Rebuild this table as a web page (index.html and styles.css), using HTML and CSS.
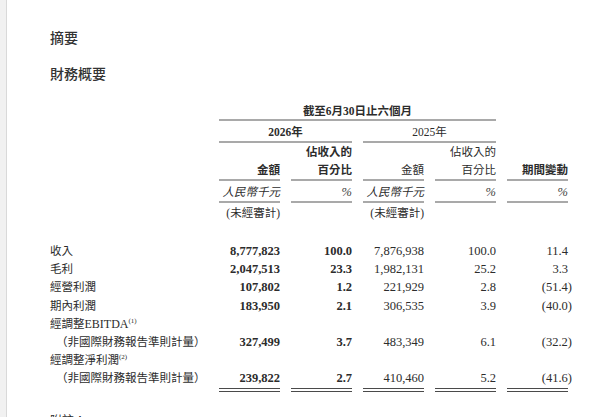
FILE: index.html
```html
<!DOCTYPE html>
<html lang="zh-Hant">
<head>
<meta charset="utf-8">
<link rel="stylesheet" href="styles.css">
</head>
<body>
<div class="viewer">
  <div class="gutter"></div>
  <main class="page">
    <h1 class="title">摘要</h1>
    <h2 class="subtitle">財務概要</h2>
    <div class="fin">
      <!-- header row 1 -->
      <div class="c"></div>
      <div class="c h span4 line b">截至6月30日止六個月</div>
      <div class="c"></div>
      <!-- header row 2 -->
      <div class="c"></div>
      <div class="c h2 span2 line b">2026年</div>
      <div class="c h2 span2 line">2025年</div>
      <div class="c"></div>
      <!-- header row 3 -->
      <div class="c"></div>
      <div class="c h3 r line b">金額</div>
      <div class="c h3 r line b">佔收入的<br>百分比</div>
      <div class="c h3 r line">金額</div>
      <div class="c h3 r line">佔收入的<br>百分比</div>
      <div class="c h3 r line b">期間變動</div>
      <!-- header row 4 -->
      <div class="c"></div>
      <div class="c h4 r line it">人民幣千元</div>
      <div class="c h4 r line it pct">%</div>
      <div class="c h4 r line it">人民幣千元</div>
      <div class="c h4 r line it pct">%</div>
      <div class="c h4 r line it pct">%</div>
      <!-- header row 5 -->
      <div class="c"></div>
      <div class="c h5 r">(未經審計)</div>
      <div class="c"></div>
      <div class="c h5 r">(未經審計)</div>
      <div class="c"></div>
      <div class="c"></div>

      <!-- data -->
      <div class="d lab first">收入</div>
      <div class="d n b first">8,777,823</div>
      <div class="d n b first">100.0</div>
      <div class="d n first">7,876,938</div>
      <div class="d n first">100.0</div>
      <div class="d n first">11.4</div>

      <div class="d lab">毛利</div>
      <div class="d n b">2,047,513</div>
      <div class="d n b">23.3</div>
      <div class="d n">1,982,131</div>
      <div class="d n">25.2</div>
      <div class="d n">3.3</div>

      <div class="d lab">經營利潤</div>
      <div class="d n b">107,802</div>
      <div class="d n b">1.2</div>
      <div class="d n">221,929</div>
      <div class="d n">2.8</div>
      <div class="d n"><span class="neg">(51.4)</span></div>

      <div class="d lab">期內利潤</div>
      <div class="d n b">183,950</div>
      <div class="d n b">2.1</div>
      <div class="d n">306,535</div>
      <div class="d n">3.9</div>
      <div class="d n"><span class="neg">(40.0)</span></div>

      <div class="d lab">經調整<span class="lat">EBITDA</span><sup>(1)</sup></div>
      <div class="d n"></div>
      <div class="d n"></div>
      <div class="d n"></div>
      <div class="d n"></div>
      <div class="d n"></div>

      <div class="d lab ind">（非國際財務報告準則計量）</div>
      <div class="d n b">327,499</div>
      <div class="d n b">3.7</div>
      <div class="d n">483,349</div>
      <div class="d n">6.1</div>
      <div class="d n"><span class="neg">(32.2)</span></div>

      <div class="d lab">經調整淨利潤<sup>(2)</sup></div>
      <div class="d n"></div>
      <div class="d n"></div>
      <div class="d n"></div>
      <div class="d n"></div>
      <div class="d n"></div>

      <div class="d lab ind">（非國際財務報告準則計量）</div>
      <div class="d n b dbl">239,822</div>
      <div class="d n b dbl">2.7</div>
      <div class="d n dbl">410,460</div>
      <div class="d n dbl">5.2</div>
      <div class="d n dbl"><span class="neg">(41.6)</span></div>
    </div>
    <p class="notes">附註：</p>
  </main>
</div>
</body>
</html>
```
FILE: styles.css
```css
html, body {
  margin: 0;
  padding: 0;
  background: #ffffff;
  height: 100%;
  overflow: hidden;
}

.viewer {
  display: flex;
  min-height: 417px;
}

.gutter {
  width: 6px;
  flex: 0 0 6px;
  background: #f1f1f1;
  border-right: 1px solid #d9d9d9;
}

.page {
  flex: 1;
  padding: 27px 0 0 43px;
  color: #2c2c2c;
  font-family: "Liberation Serif", "Noto Sans CJK TC", serif;
}

.title,
.subtitle {
  margin: 0;
  font-family: "Noto Sans CJK TC", sans-serif;
  font-size: 14px;
  line-height: 20px;
  font-weight: 500;
  color: #333333;
}

.subtitle {
  margin-top: 16px;
}

.fin {
  display: grid;
  grid-template-columns: 158px repeat(5, 61px);
  column-gap: 11px;
  margin-top: 20px;
  font-size: 11.5px;
}

.c {
  line-height: 16px;
}

.h {
  text-align: center;
}

.span4 { grid-column: span 4; }
.span2 { grid-column: span 2; }

.line {
  border-bottom: 2px solid #a9a9a9;
}

.b { font-weight: 700; }

.h2 {
  text-align: center;
  line-height: 18px;
  padding-top: 2px;
}

.h3 {
  line-height: 18px;
  align-self: end;
}

.h4 {
  line-height: 18px;
  padding-top: 2px;
}

.h5 {
  line-height: 18px;
  padding-top: 1px;
}

.r { text-align: right; }

.it { font-style: italic; }

.pct {
  font-family: "Liberation Serif", serif;
  font-size: 12.5px;
  color: #444;
}

.d {
  line-height: 18.2px;
}

.first {
  margin-top: 20px;
}

.lab {
  font-size: 11.5px;
}

.lab sup {
  font-size: 7px;
  line-height: 0;
  vertical-align: 5px;
}

.lat {
  font-family: "Liberation Serif", serif;
  font-size: 12px;
}

.ind {
  padding-left: 6px;
}

.n {
  text-align: right;
  font-size: 12.5px;
}

.neg {
  margin-right: -4px;
}

.dbl {
  border-bottom: 4px double #4a4a4a;
}

.notes {
  margin: 19px 0 0;
  font-family: "Noto Sans CJK TC", sans-serif;
  font-size: 12px;
  line-height: 18px;
}
```
